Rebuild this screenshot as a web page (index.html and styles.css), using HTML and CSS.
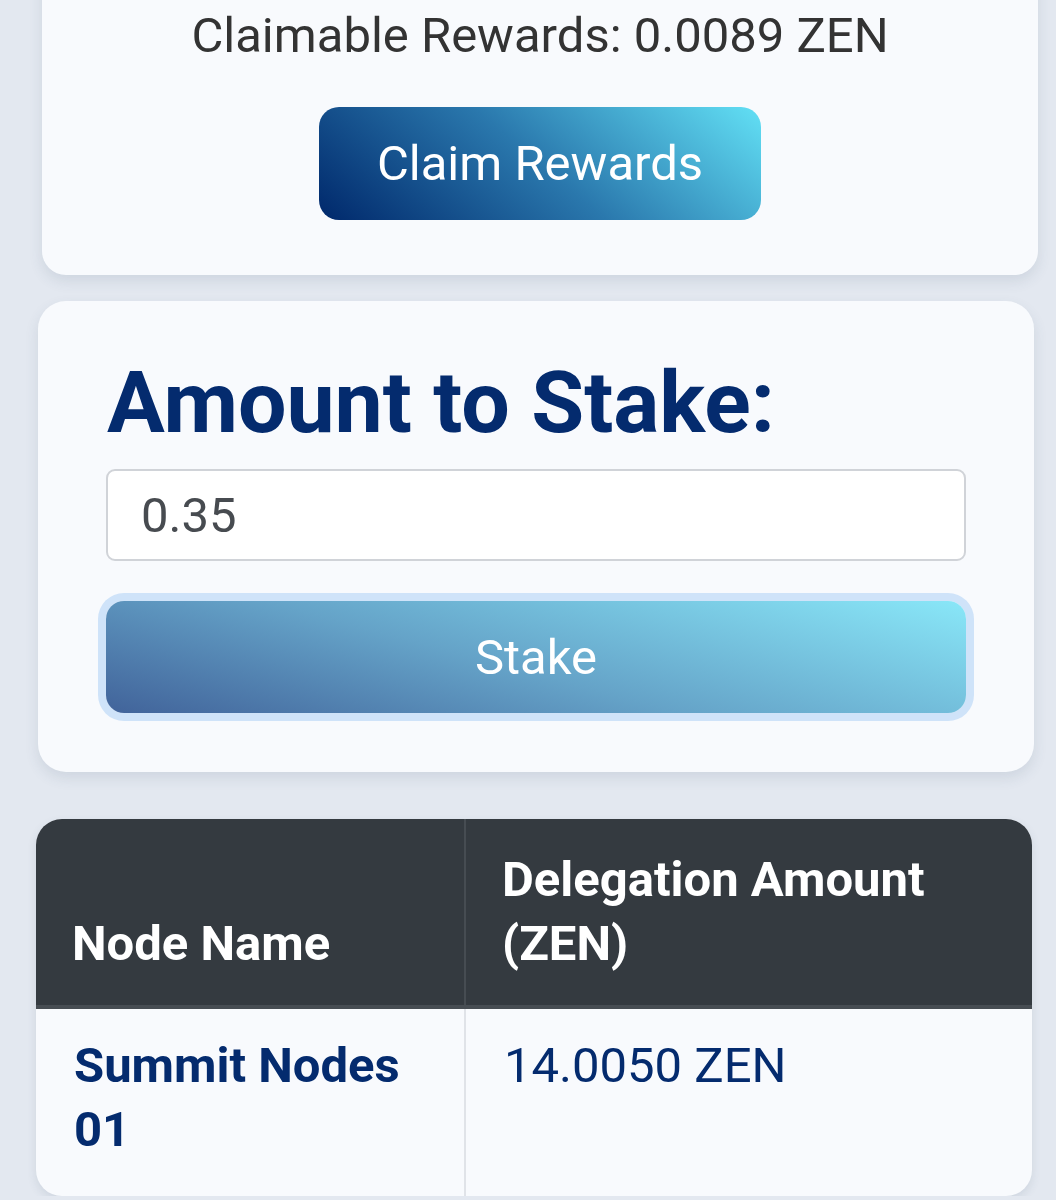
FILE: index.html
```html
<!DOCTYPE html>
<html lang="en">
<head>
    <meta charset="UTF-8">
    <meta name="viewport" content="width=device-width, initial-scale=1.0">
    <title>Stake ZEN</title>
    <link rel="stylesheet" href="styles.css">
</head>
<body>
    <div class="page">
        <div class="card rewards-card">
            <p class="claimable">Claimable Rewards: 0.0089 ZEN</p>
            <button class="btn-claim">Claim Rewards</button>
        </div>

        <div class="card stake-card">
            <h2>Amount to Stake:</h2>
            <input class="amount-input" type="text" value="0.35">
            <button class="btn-stake">Stake</button>
        </div>

        <div class="table-wrap">
            <table class="delegations">
                <thead>
                    <tr>
                        <th class="col-name">Node Name</th>
                        <th>Delegation Amount (ZEN)</th>
                    </tr>
                </thead>
                <tbody>
                    <tr>
                        <td class="node-name">Summit Nodes 01</td>
                        <td>14.0050 ZEN</td>
                    </tr>
                </tbody>
            </table>
        </div>
    </div>
</body>
</html>
```

FILE: styles.css
```css
body {
    margin: 0;
    background-color: #e3e8f0;
    font-family: Roboto, "Liberation Sans", Arial, sans-serif;
    overflow: hidden;
}

.page {
    display: flex;
    flex-direction: column;
}

.card {
    background-color: #f8fafd;
    border-radius: 28px;
    box-shadow: 0 6px 14px rgba(60, 80, 110, 0.12);
    width: 996px;
    box-sizing: border-box;
}

.rewards-card {
    margin: -40px 0 0 42px;
    padding: 47px 0 55px;
    text-align: center;
    border-radius: 24px;
}

.claimable {
    margin: 0 0 43px;
    font-size: 49px;
    color: #333333;
}

.btn-claim {
    width: 442px;
    height: 113px;
    border: none;
    border-radius: 20px;
    background: linear-gradient(40deg, #00286b 0%, #2a78ad 50%, #62e0f5 100%);
    color: #ffffff;
    font-family: inherit;
    font-size: 49px;
    cursor: pointer;
}

.stake-card {
    margin: 26px 0 0 38px;
    padding: 51px 68px 59px;
}

.stake-card h2 {
    margin: 0 0 16px 1px;
    font-size: 86px;
    font-weight: 700;
    color: #042b6e;
}

.amount-input {
    display: block;
    width: 100%;
    height: 92px;
    box-sizing: border-box;
    padding: 0 33px;
    border: 2px solid #d0d3d8;
    border-radius: 9px;
    background-color: #ffffff;
    font-family: inherit;
    font-size: 49px;
    color: #474b50;
}

.btn-stake {
    display: block;
    width: 100%;
    height: 112px;
    margin-top: 40px;
    border: none;
    border-radius: 18px;
    background: linear-gradient(15deg, #41639a 0%, #65a3c8 45%, #89e7f8 100%);
    box-shadow: 0 0 0 8px #cfe3f9;
    color: #ffffff;
    font-family: inherit;
    font-size: 49px;
    cursor: pointer;
}

.table-wrap {
    margin: 47px 0 0 36px;
    width: 996px;
    border-radius: 26px;
    overflow: hidden;
    background-color: #f8fafd;
    box-shadow: 0 4px 10px rgba(60, 80, 110, 0.12);
}

.delegations {
    width: 100%;
    border-collapse: collapse;
    font-size: 49px;
    line-height: 64px;
}

.delegations th {
    background-color: #343a40;
    color: #ffffff;
    font-weight: 700;
    text-align: left;
    vertical-align: bottom;
    padding: 29px 36px;
    border-bottom: 4px solid #474d53;
}

.delegations th.col-name {
    width: 356px;
    border-right: 2px solid #464c52;
}

.delegations td {
    vertical-align: top;
    padding: 25px 36px 34px 38px;
    color: #042b6e;
}

.delegations td.node-name {
    font-weight: 700;
    border-right: 2px solid #e0e3e8;
}
```
